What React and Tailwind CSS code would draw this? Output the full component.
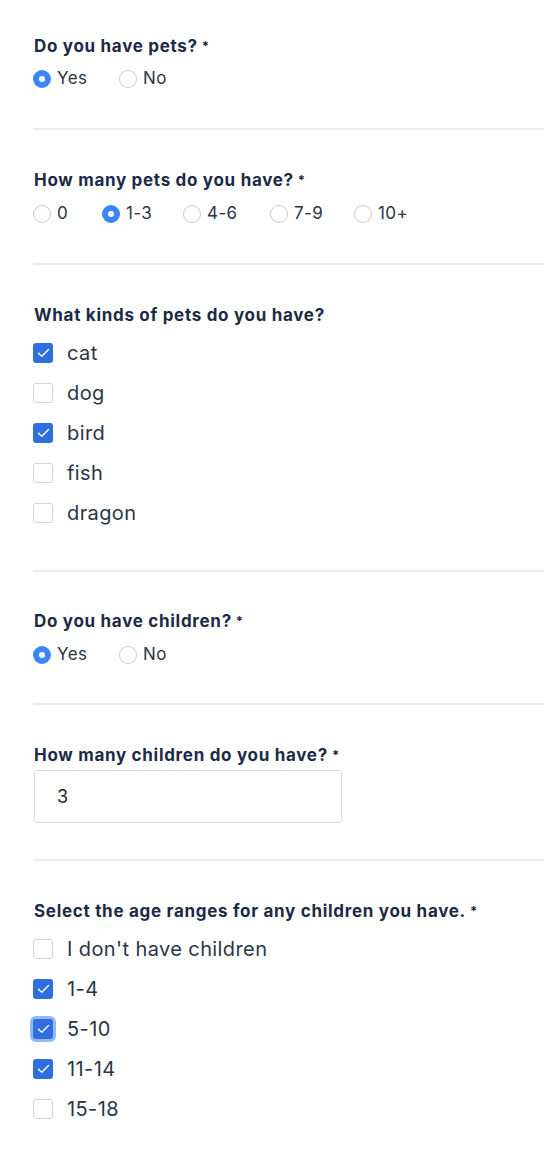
import React, { useState } from 'react';

const Radio = ({ checked, label, className = '' }) => (
  <label className={`flex items-center h-6 ${className}`}>
    <span
      className={`w-[18px] h-[18px] rounded-full flex items-center justify-center shrink-0 ${
        checked ? 'bg-[#3b86f4]' : 'border border-[#cacaca] bg-white'
      }`}
    >
      {checked && <span className="w-[6px] h-[6px] rounded-full bg-white" />}
    </span>
    <span className="ml-[6px] text-[17px] tracking-[0.4px] text-[#2a3548]">{label}</span>
  </label>
);

const Checkbox = ({ checked, focused, label }) => (
  <label className="flex items-center h-6">
    <span
      className={`w-5 h-5 rounded-[3px] flex items-center justify-center shrink-0 ${
        checked ? 'bg-[#2f6fe0]' : 'border border-[#d6d6d6] bg-white'
      } ${focused ? 'ring-[3px] ring-[#92b8f7]' : ''}`}
    >
      {checked && (
        <svg width="13" height="10" viewBox="0 0 13 10" fill="none">
          <path d="M1.5 5.3 L4.8 8.3 L11.5 1.6" stroke="white" strokeWidth="1.4" strokeLinecap="round" strokeLinejoin="round" />
        </svg>
      )}
    </span>
    <span className="ml-[14px] text-[20px] tracking-[0.4px] text-[#2a3548]">{label}</span>
  </label>
);

const Label = ({ children, required }) => (
  <div className="h-5 leading-5 text-[17px] tracking-[0.7px] font-bold text-[#1b2a46] pl-[1px] whitespace-nowrap">
    {children}
    {required && <span className="ml-1 text-[13px] align-top">*</span>}
  </div>
);

const Divider = () => <div className="h-[2px] bg-[#ebebec]" />;

export default function App() {
  const [count, setCount] = useState('3');
  const pets = [
    { label: 'cat', checked: true },
    { label: 'dog', checked: false },
    { label: 'bird', checked: true },
    { label: 'fish', checked: false },
    { label: 'dragon', checked: false },
  ];
  const ages = [
    { label: "I don't have children", checked: false },
    { label: '1-4', checked: true },
    { label: '5-10', checked: true, focused: true },
    { label: '11-14', checked: true },
    { label: '15-18', checked: false },
  ];

  return (
    <div className="bg-white min-h-[1160px] pl-[33px] pt-[36px]" style={{ fontFamily: 'Inter, "Open Sans", sans-serif' }}>
      <section className="pb-[37px]">
        <Label required>Do you have pets?</Label>
        <div className="flex mt-[11px]">
          <Radio checked label="Yes" className="w-[86px]" />
          <Radio label="No" />
        </div>
      </section>
      <Divider />

      <section className="pt-[40px] pb-[37px]">
        <Label required>How many pets do you have?</Label>
        <div className="flex mt-[12px]">
          <Radio label="0" className="w-[69px]" />
          <Radio checked label="1-3" className="w-[81px]" />
          <Radio label="4-6" className="w-[87px]" />
          <Radio label="7-9" className="w-[84px]" />
          <Radio label="10+" />
        </div>
      </section>
      <Divider />

      <section className="pt-[40px] pb-[45px]">
        <Label>What kinds of pets do you have?</Label>
        <div className="flex flex-col gap-4 mt-[16px]">
          {pets.map((p) => (
            <Checkbox key={p.label} {...p} />
          ))}
        </div>
      </section>
      <Divider />

      <section className="pt-[39px] pb-[36px]">
        <Label required>Do you have children?</Label>
        <div className="flex mt-[12px]">
          <Radio checked label="Yes" className="w-[86px]" />
          <Radio label="No" />
        </div>
      </section>
      <Divider />

      <section className="pt-[40px] pb-[36px]">
        <Label required>How many children do you have?</Label>
        <input
          value={count}
          onChange={(e) => setCount(e.target.value)}
          className="mt-[5px] ml-[1px] w-[308px] h-[53px] border border-[#dadada] rounded-[3px] pl-[22px] text-[18px] text-[#222] outline-none"
        />
      </section>
      <Divider />

      <section className="pt-[40px] pb-[30px]">
        <Label required>Select the age ranges for any children you have.</Label>
        <div className="flex flex-col gap-4 mt-[16px]">
          {ages.map((a) => (
            <Checkbox key={a.label} {...a} />
          ))}
        </div>
      </section>
    </div>
  );
}
